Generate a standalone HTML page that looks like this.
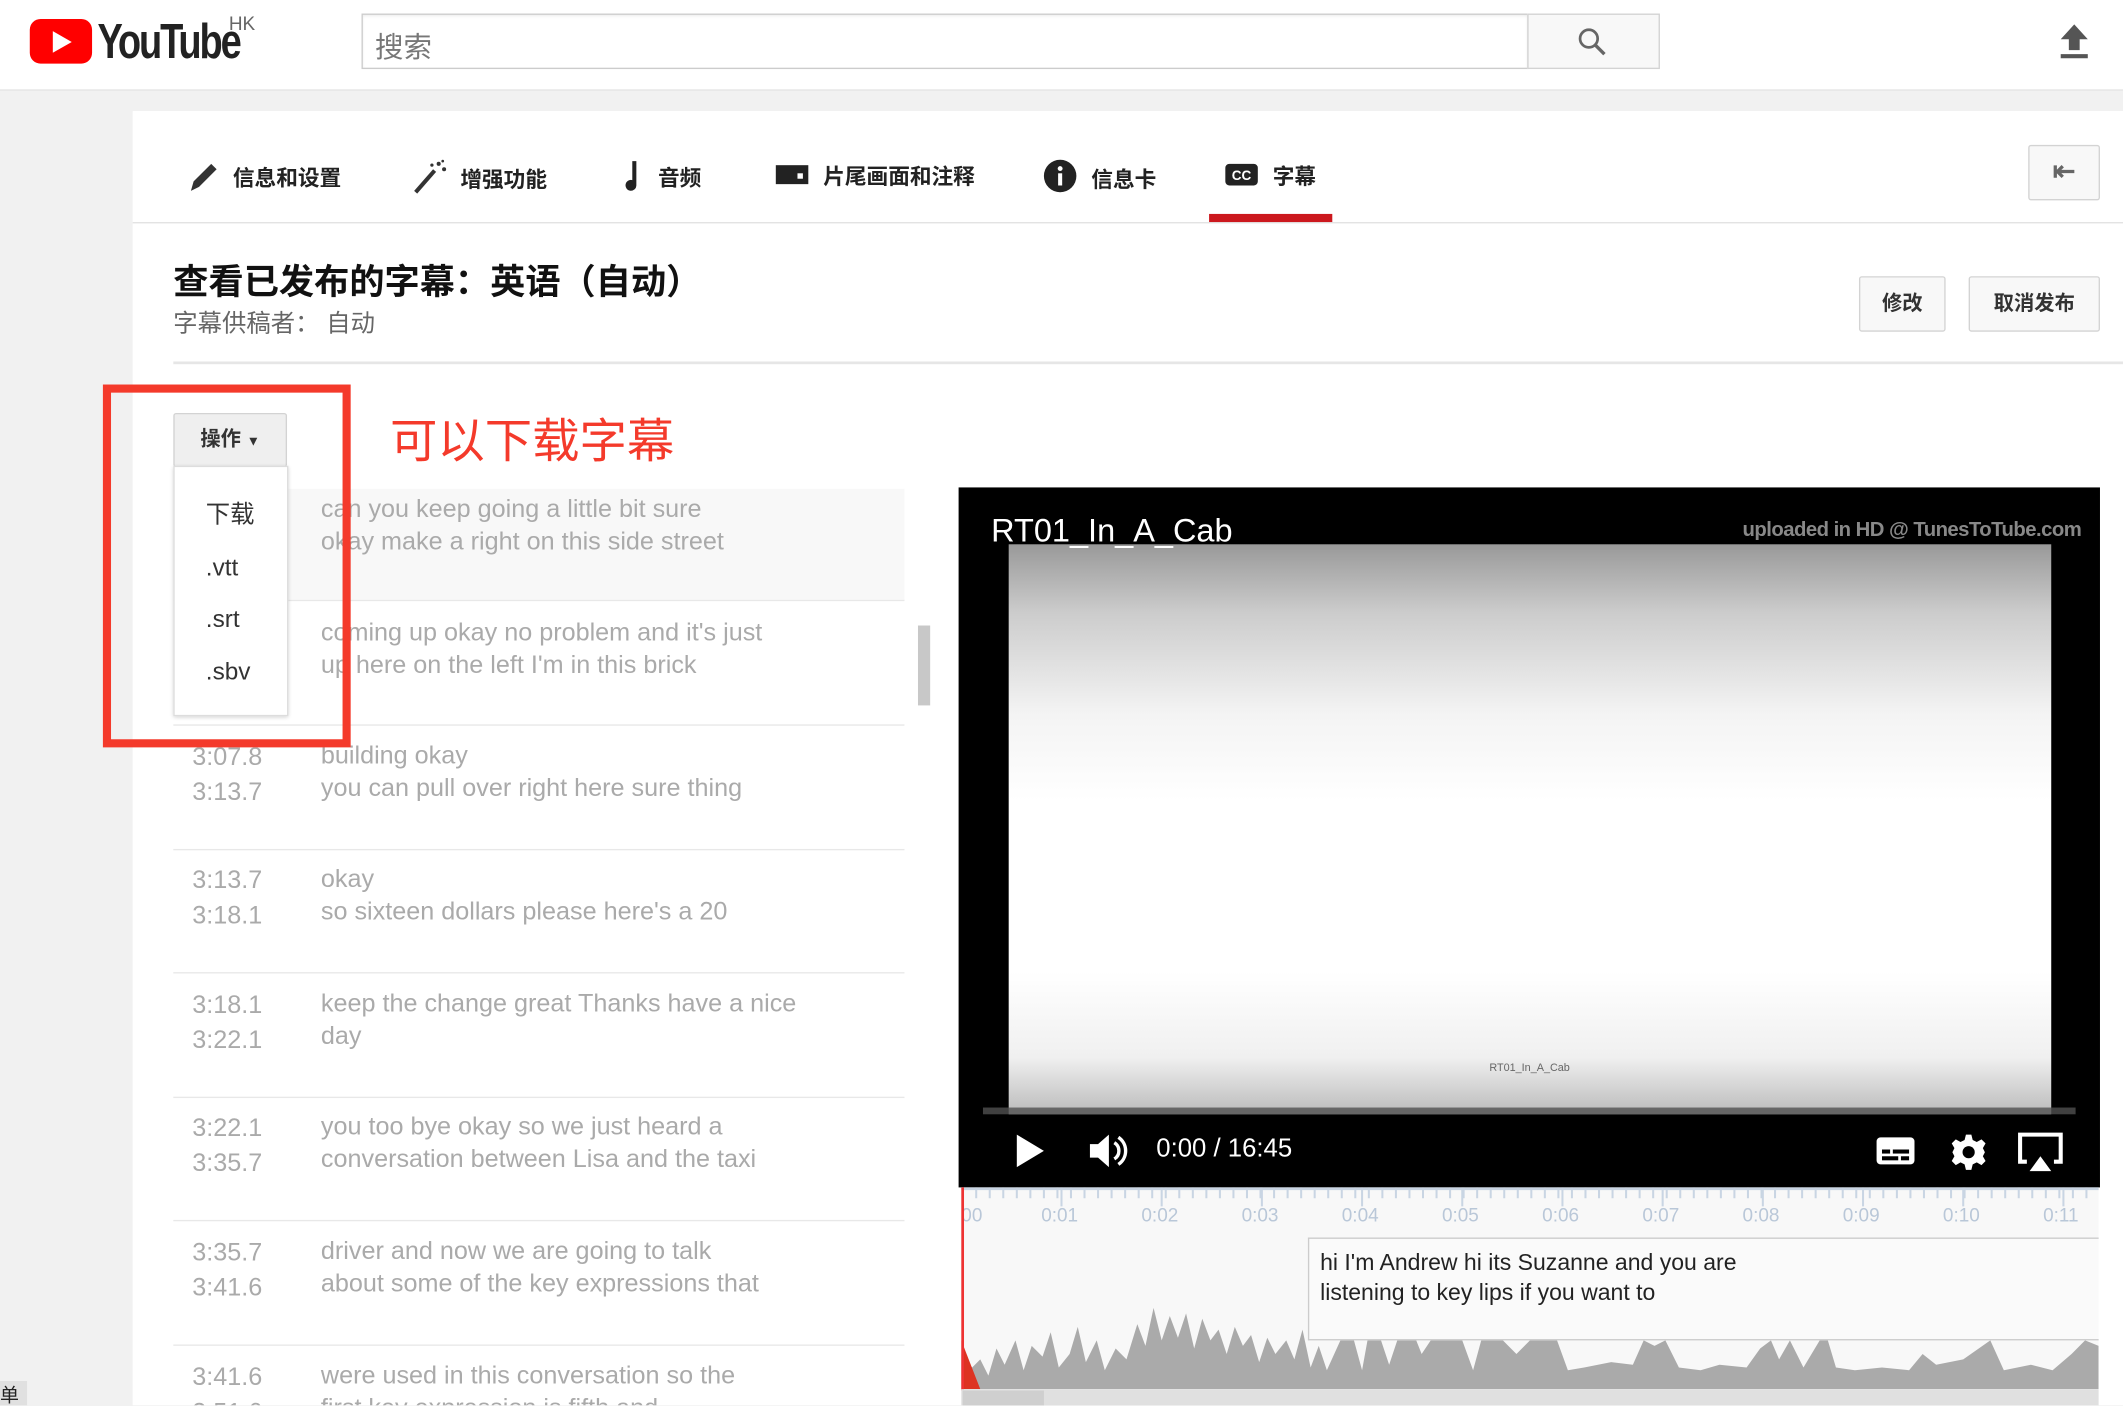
<!DOCTYPE html>
<html style="width:2123px;height:1406px;overflow:hidden"><head><meta charset="utf-8"><style>
*{margin:0;padding:0;box-sizing:border-box}
body{width:2123px;height:1406px;overflow:hidden;background:#f1f1f1;font-family:"Liberation Sans","Noto Sans CJK SC",sans-serif;position:relative}
#w{position:absolute;left:0;top:0;width:1568px;height:1038px;overflow:hidden;transform:scale(1.35395);transform-origin:0 0;background:#f1f1f1}
.a{position:absolute}
.hdr{left:0;top:0;width:1568px;height:67px;background:#fff;border-bottom:1px solid #e3e3e3}
.tab{position:absolute;top:117px;font-size:16px;font-weight:bold;color:#222;display:flex;align-items:center;gap:8px}
.row{position:absolute;left:128px;width:540px;height:92px;border-bottom:1px solid #e8e8e8;color:#aaa;font-size:18.6px}
.row .t{position:absolute;left:14px;top:14px;line-height:26px}
.row .x{position:absolute;left:109px;top:4px;line-height:24px;width:420px}
.btn{position:absolute;background:#f8f8f8;border:1px solid #d3d3d3;border-radius:2px;font-size:15px;font-weight:bold;color:#333;text-align:center}
.tl{position:absolute;top:889px;font-size:14px;color:#b9c7d8}
</style></head><body><div id="w">
<div class="a hdr"></div>
<div class="a" style="left:22px;top:14px;width:46px;height:33px;background:#f00;border-radius:8px"></div>
<div class="a" style="left:39px;top:23px;width:0;height:0;border-left:14px solid #fff;border-top:8px solid transparent;border-bottom:8px solid transparent"></div>
<div class="a" style="left:72px;top:10px;font-size:36px;font-weight:bold;letter-spacing:-2px;color:#222;transform:scaleX(.78);transform-origin:0 0">YouTube</div>
<div class="a" style="left:169px;top:9px;font-size:14px;color:#666">HK</div>
<div class="a" style="left:267px;top:10px;width:862px;height:41px;border:1px solid #ccc;background:#fff;box-shadow:inset 0 1px 2px #eee"></div>
<div class="a" style="left:277px;top:19px;font-size:21px;color:#777">搜索</div>
<div class="a" style="left:1128px;top:10px;width:98px;height:41px;border:1px solid #d3d3d3;background:#f8f8f8"></div>
<svg class="a" style="left:1164px;top:19px" width="24" height="24" viewBox="0 0 24 24"><circle cx="9.5" cy="9.5" r="6.5" fill="none" stroke="#666" stroke-width="2"/><path d="M14 14l7 7" stroke="#666" stroke-width="2.5"/></svg>
<svg class="a" style="left:1519px;top:16px" width="26" height="28" viewBox="0 0 26 28"><path d="M13 2L3 13h6v8h8v-8h6z M3 24h20v3H3z" fill="#555"/></svg>

<div class="a" style="left:98px;top:82px;width:1470px;height:956px;background:#fff"></div>
<div class="a" style="left:98px;top:164px;width:1470px;height:1px;background:#e2e2e2"></div>
<div class="tab" style="left:138px"><svg width="26" height="26" viewBox="0 0 26 26"><path d="M3 24l2-7L18 4l4 4L9 21z" fill="#333"/></svg>信息和设置</div>
<div class="tab" style="left:304px"><svg width="28" height="28" viewBox="0 0 28 28"><path d="M3 25L17 9" stroke="#333" stroke-width="3"/><circle cx="20" cy="4" r="1.5" fill="#333"/><circle cx="24" cy="8" r="1.5" fill="#333"/><circle cx="15" cy="5" r="1.2" fill="#333"/><circle cx="23" cy="2" r="1" fill="#333"/></svg>增强功能</div>
<div class="tab" style="left:458px"><svg width="20" height="26" viewBox="0 0 20 26"><path d="M9 2h3v18a4 4 0 1 1-3-4z" fill="#222"/></svg>音频</div>
<div class="tab" style="left:572px"><svg width="28" height="22" viewBox="0 0 28 22"><rect x="1" y="4" width="24" height="14" fill="#222"/><rect x="17" y="10" width="4" height="4" fill="#fff"/></svg>片尾画面和注释</div>
<div class="tab" style="left:770px"><svg width="28" height="28" viewBox="0 0 28 28"><circle cx="13" cy="13" r="12" fill="#222"/><rect x="11.5" y="11" width="3" height="9" fill="#fff"/><circle cx="13" cy="7.5" r="1.8" fill="#fff"/></svg>信息卡</div>
<div class="tab" style="left:904px"><svg width="28" height="22" viewBox="0 0 28 22"><rect x="1" y="3" width="24" height="16" rx="3" fill="#222"/><text x="13" y="15" font-size="10" font-weight="bold" fill="#fff" text-anchor="middle" font-family="Liberation Sans">CC</text></svg>字幕</div>
<div class="a" style="left:893px;top:158px;width:91px;height:6px;background:#cc181e"></div>
<div class="btn" style="left:1498px;top:107px;width:53px;height:41px;line-height:38px;font-size:20px;color:#666">⇤</div>

<div class="a" style="left:128px;top:188px;font-size:26px;font-weight:bold;color:#111">查看已发布的字幕：英语（自动）</div>
<div class="a" style="left:128px;top:225px;font-size:18px;color:#666">字幕供稿者： 自动</div>
<div class="btn" style="left:1373px;top:204px;width:64px;height:41px;line-height:39px">修改</div>
<div class="btn" style="left:1454px;top:204px;width:97px;height:41px;line-height:39px">取消发布</div>
<div class="a" style="left:128px;top:267px;width:1440px;height:2px;background:#e6e6e6"></div>

<div class="a" style="left:128px;top:361px;width:540px;height:82px;background:#f8f8f8"></div>
<div class="row" style="top:352px;height:92px;background:transparent"><div class="x" style="top:12px">can you keep going a little bit sure<br>okay make a right on this side street</div></div>
<div class="row" style="top:444px"><div class="x" style="top:11px">coming up okay no problem and it's just<br>up here on the left I'm in this brick</div></div>
<div class="row" style="top:536px"><div class="t" style="top:10px">3:07.8<br>3:13.7</div><div class="x" style="top:10px">building okay<br>you can pull over right here sure thing</div></div>
<div class="row" style="top:627px"><div class="t" style="top:10px">3:13.7<br>3:18.1</div><div class="x" style="top:10px">okay<br>so sixteen dollars please here's a 20</div></div>
<div class="row" style="top:719px"><div class="t" style="top:10px">3:18.1<br>3:22.1</div><div class="x" style="top:10px">keep the change great Thanks have a nice<br>day</div></div>
<div class="row" style="top:810px"><div class="t" style="top:10px">3:22.1<br>3:35.7</div><div class="x" style="top:10px">you too bye okay so we just heard a<br>conversation between Lisa and the taxi</div></div>
<div class="row" style="top:902px"><div class="t" style="top:10px">3:35.7<br>3:41.6</div><div class="x" style="top:10px">driver and now we are going to talk<br>about some of the key expressions that</div></div>
<div class="row" style="top:994px;height:44px;border:0;overflow:hidden"><div class="t" style="top:10px">3:41.6<br>3:51.6</div><div class="x" style="top:10px">were used in this conversation so the<br>first key expression is fifth and</div></div>
<div class="a" style="left:678px;top:462px;width:9px;height:59px;background:#c8c8c8"></div>
<div class="a" style="left:0;top:1020px;width:20px;height:18px;background:#e0e0e0;font-size:14px;color:#222">单</div>

<div class="a" style="left:76px;top:284px;width:183px;height:268px;border:6px solid #f43a2b"></div>
<div class="btn" style="left:128px;top:305px;width:84px;height:40px;line-height:38px;background:#efefef">操作 <span style="font-size:10px">▼</span></div>
<div class="a" style="left:128px;top:344px;width:85px;height:185px;background:#fff;border:1px solid #ddd;box-shadow:0 1px 3px rgba(0,0,0,.2);font-size:18px;color:#333;line-height:38.5px;padding:16px 0 0 23px">下载<br>.vtt<br>.srt<br>.sbv</div>
<div class="a" style="left:288px;top:298px;font-size:35px;color:#f43a2b">可以下载字幕</div>

<div class="a" style="left:708px;top:360px;width:843px;height:517px;background:#000"></div>
<div class="a" style="left:745px;top:402px;width:770px;height:421px;background:linear-gradient(#999 0%,#ccc 12%,#f4f4f4 30%,#fff 45%,#fff 75%,#f0f0f0 90%,#bbb 100%)"></div>
<div class="a" style="left:1100px;top:784px;font-size:8px;color:#666">RT01_In_A_Cab</div>
<div class="a" style="left:732px;top:379px;font-size:24px;color:#fff">RT01_In_A_Cab</div>
<div class="a" style="left:1287px;top:383px;font-size:15px;font-weight:bold;color:#888;letter-spacing:-.4px">uploaded in HD @ TunesToTube.com</div>
<div class="a" style="left:726px;top:818px;width:807px;height:5px;background:rgba(80,80,80,.8)"></div>
<svg class="a" style="left:748px;top:836px" width="26" height="28"><path d="M3 2L23 14L3 26z" fill="#fff"/></svg>
<svg class="a" style="left:803px;top:836px" width="32" height="28" viewBox="0 0 32 28"><path d="M2 9h6l8-7v24l-8-7H2z" fill="#fff"/><path d="M20 8a7 7 0 0 1 0 12M23 4a12 12 0 0 1 0 20" stroke="#fff" stroke-width="2.5" fill="none"/></svg>
<div class="a" style="left:854px;top:838px;font-size:19px;color:#fff">0:00 / 16:45</div>
<svg class="a" style="left:1385px;top:838px" width="30" height="24"><rect x="1" y="2" width="28" height="20" rx="3" fill="#fff"/><rect x="5" y="11" width="6" height="3" fill="#000"/><rect x="13" y="11" width="12" height="3" fill="#000"/><rect x="5" y="16" width="12" height="3" fill="#000"/><rect x="19" y="16" width="6" height="3" fill="#000"/></svg>
<svg class="a" style="left:1440px;top:837px" width="28" height="28" viewBox="0 0 28 28"><path d="M12 1h4l1 4 3 1.5 3.5-2 3 3-2 3.5L26 14l-1.5 3 2 3.5-3 3-3.5-2L17 23l-1 4h-4l-1-4-3-1.5-3.5 2-3-3 2-3.5L2 14l1.5-3-2-3.5 3-3 3.5 2L11 5z" fill="#fff"/><circle cx="14" cy="14" r="4.5" fill="#000"/></svg>
<svg class="a" style="left:1489px;top:836px" width="36" height="32"><path d="M8 22H3V2h30v20h-5" stroke="#fff" stroke-width="3" fill="none"/><path d="M18 18l8 11H10z" fill="#fff"/></svg>

<div class="a" style="left:710px;top:877px;width:840px;height:161px;background:#f8f8f8"></div>
<div class="a" style="left:710px;top:877px;width:840px;height:2px;background:#c9d5e3"></div>
<svg class="a" style="left:710px;top:877px" width="840" height="20">
<g stroke="#c9d5e3" stroke-width="1.5">
<path d="M1 0v8M11 0v8M21 0v8M31 0v8M41 0v8M51 0v8M61 0v8M71 0v8M81 0v8M91 0v8M101 0v8M111 0v8M121 0v8M131 0v8M141 0v8M151 0v8M161 0v8M171 0v8M181 0v8M191 0v8M201 0v8M211 0v8M221 0v8M231 0v8M241 0v8M251 0v8M261 0v8M271 0v8M281 0v8M291 0v8M301 0v8M311 0v8M321 0v8M331 0v8M341 0v8M351 0v8M361 0v8M371 0v8M381 0v8M391 0v8M401 0v8M411 0v8M421 0v8M431 0v8M441 0v8M451 0v8M461 0v8M471 0v8M481 0v8M491 0v8M501 0v8M511 0v8M521 0v8M531 0v8M541 0v8M551 0v8M561 0v8M571 0v8M581 0v8M591 0v8M601 0v8M611 0v8M621 0v8M631 0v8M641 0v8M651 0v8M661 0v8M671 0v8M681 0v8M691 0v8M701 0v8M711 0v8M721 0v8M731 0v8M741 0v8M751 0v8M761 0v8M771 0v8M781 0v8M791 0v8M801 0v8M811 0v8M821 0v8M831 0v8"/>
<path d="M74 0v14M148 0v14M222 0v14M296 0v14M370 0v14M444 0v14M518 0v14M592 0v14M666 0v14M740 0v14M814 0v14"/></g></svg>
<div class="tl" style="left:710px">00</div><div class="tl" style="left:769px">0:01</div><div class="tl" style="left:843px">0:02</div><div class="tl" style="left:917px">0:03</div><div class="tl" style="left:991px">0:04</div><div class="tl" style="left:1065px">0:05</div><div class="tl" style="left:1139px">0:06</div><div class="tl" style="left:1213px">0:07</div><div class="tl" style="left:1287px">0:08</div><div class="tl" style="left:1361px">0:09</div><div class="tl" style="left:1435px">0:10</div><div class="tl" style="left:1509px">0:11</div>
<svg class="a" style="left:710px;top:960px" width="840" height="66" viewBox="0 0 840 66"><path fill="#aaa" d="M0 66V40L8 50 14 44 20 56 26 36 32 48 40 30 46 52 52 34 60 42 66 24 72 50 80 40 86 20 92 46 100 30 106 52 114 36 122 44 130 18 136 34 142 6 148 30 154 12 160 28 166 10 172 36 178 14 184 30 190 22 196 40 202 20 208 34 214 26 220 46 226 28 232 40 240 30 246 44 252 22 258 50 264 34 270 52 280 30 290 30 296 52 300 30 310 30 316 48 322 30 336 30 340 40 348 28 370 30 378 52 384 30 400 30 410 40 420 30 440 30 448 52 460 50 480 46 496 48 504 30 512 34 520 30 530 50 546 52 560 48 580 50 590 36 598 30 604 44 612 30 622 50 634 30 640 30 646 50 660 52 680 50 700 52 710 40 720 48 740 44 760 30 770 52 790 48 806 52 820 40 830 30 840 34V66z"/><path d="M0 30L14 66H0z" fill="#d32"/></svg>
<div class="a" style="left:710px;top:877px;width:2px;height:150px;background:#e33"></div>
<div class="a" style="left:966px;top:914px;width:584px;height:76px;background:#fafafa;border:1px solid #ccc;border-right:0;font-size:17px;color:#222;line-height:22px;padding:7px 8px">hi I'm Andrew hi its Suzanne and you are<br>listening to key lips if you want to</div>
<div class="a" style="left:710px;top:1026px;width:840px;height:12px;background:#e0e0e0"></div>
<div class="a" style="left:711px;top:1027px;width:60px;height:11px;background:#cfcfcf"></div>
</div></body></html>
